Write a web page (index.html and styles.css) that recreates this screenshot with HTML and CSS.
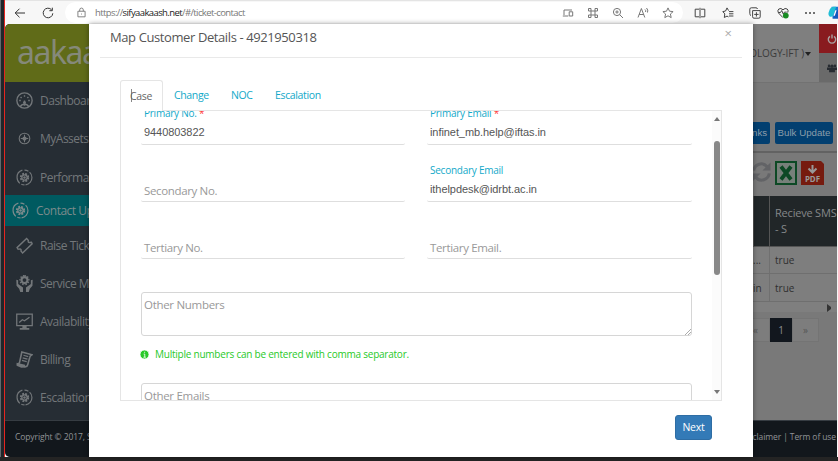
FILE: index.html
```html
<!DOCTYPE html>
<html lang="en">
<head>
<meta charset="utf-8">
<title>Ticket contact</title>
<link rel="stylesheet" href="styles.css">
</head>
<body>
<svg class="defs" aria-hidden="true">
  <symbol id="gear" viewBox="0 0 16 16"><g fill="none" stroke="currentColor"><path d="M6 1.1A7 7 0 0 0 1 8a7 7 0 0 0 2.6 5.5M5 14.3A7 7 0 0 0 8 15M9 15a7 7 0 0 0 6-7 7 7 0 0 0-2.2-5M11.7 2.1A7 7 0 0 0 8 1" stroke-width="1.1"/><circle cx="8" cy="8" r="3.4" stroke-width="2" stroke-dasharray="1.7 1"/><circle cx="8" cy="8" r="2.5" stroke-width="1.2"/></g><circle cx="8" cy="8" r="1.2" fill="currentColor"/></symbol>
</svg>
<div class="window">
  <header class="browser">
    <svg class="b-icon back" viewBox="0 0 12 12"><path d="M11 6H1.2M5.5 1.7 1.2 6l4.3 4.3"/></svg>
    <svg class="b-icon reload" viewBox="0 0 12 12"><path d="M10.8 6.3A4.8 4.8 0 1 1 9.6 2.8M10.3.7v3H7.4"/></svg>
    <div class="address">
      <svg class="b-icon lock" viewBox="0 0 10 12"><path d="M1 4.6h8v6.2H1zM3 4.6V3.1a2 2 0 0 1 4 0v1.5M5 7.2v1"/></svg>
      <span class="url">https://<b>sifyaakaash.net</b>/#/ticket-contact</span>
      <div class="tools">
        <svg class="b-icon" viewBox="0 0 12 12"><path d="M2 8V3h8M.8 9h5.5M7.2 4.8h3.5V9H7.2z"/></svg>
        <svg class="b-icon" viewBox="0 0 12 12"><path d="M4 1.500v9M8 1.500v9M1.500 4h9M1.500 8h9M1.500 1.500h2.500M8 1.500h2.500M1.500 10.500h2.500M8 10.500h2.500M1.500 1.500V4M10.500 1.500V4M1.500 8v2.500M10.500 8v2.500"/></svg>
        <svg class="b-icon" viewBox="0 0 12 12"><circle cx="5" cy="5" r="3.6"/><path d="M7.7 7.7 11 11M3.3 5h3.4M5 3.3v3.4"/></svg>
        <svg class="b-icon" viewBox="0 0 12 12"><path d="m1 10.5 3.4-9 3.4 9M2.2 7.5h4.500M8 2.500q1.100 1 .6 2.500M9.500 1q2 2 1 4.500"/></svg>
        <svg class="b-icon" viewBox="0 0 12 12"><path d="m6 .9 1.500 3.300 3.600.4-2.700 2.400.8 3.600L6 8.800l-3.200 1.800.8-3.600L.9 4.600l3.600-.4z"/></svg>
      </div>
    </div>
    <div class="actions">
      <svg class="b-icon" viewBox="0 0 12 12"><path d="M5 2.2H1.200v7.600H5M7 2.200h3.800v7.600H7M6 .8v10.400"/></svg>
      <svg class="b-icon" viewBox="0 0 12 12"><path d="M6.600 3.600 5 .9 3.600 4 .8 4.600l2 2.300-.5 3.600L5 9.100l1.500.8M7 4.600h4.400M7 6.800h4.400M7 9h4.400"/></svg>
      <svg class="b-icon" viewBox="0 0 12 12"><path d="M3.600 3.600h7.600v6.200q0 1.400-1.400 1.400H5q-1.400 0-1.400-1.400zM2 8.600Q.6 8 .8 6.400V2.200Q.9.8 2.300.8H7q1.200 0 1.600 1.200M7.400 5.200v4.400M5.200 7.400h4.400"/></svg>
      <svg class="b-icon" viewBox="0 0 12 12"><path d="M5.900 10.600 1.500 6Q0 3.600 1.800 2 4 .6 6 2.800 8 .6 10.200 2q1.600 1.600.5 3.600M1.500 5.500h2l1.200-2 1.600 3.600 1.200-2h2.200"/><circle class="ok" cx="8.800" cy="8.600" r="2.900"/></svg>
      <svg class="b-icon dots" viewBox="0 0 12 12"><circle cx="2" cy="6" r="1"/><circle cx="6" cy="6" r="1"/><circle cx="10" cy="6" r="1"/></svg>
    </div>
    <svg class="copilot" viewBox="0 0 11 16"><path fill="#1d78d2" d="M4 1h7v13H5z"/><path fill="#20bdd6" d="M6 1h3L6 10q-1 3-4 2-2-1-1.500-4L2 4q1-3 4-3"/><path fill="#1555bd" d="M8 5h3v9H5q2-1 3-9"/><path fill="#fff" d="M8 5h1.500L7.500 11H6z"/></svg>
  </header>

  <div class="app">
    <aside class="sidebar">
      <div class="brand">aakaa</div>
      <nav>
        <a class="item"><svg viewBox="0 0 16 16"><g fill="none" stroke="currentColor" stroke-width="1.3"><circle cx="8" cy="8" r="7.2"/><path d="M8 8v5M4 14q1-2.500 4-2.500t4 2.500"/><path d="M3 8h1.500M11.500 8H13M4.300 4.600l1 1M11.700 4.600l-1 1M8 3v1.500"/></g><circle cx="8" cy="10" r="1.400" fill="currentColor"/></svg>Dashboard</a>
        <a class="item"><svg viewBox="0 0 16 16"><g fill="none" stroke="currentColor"><circle cx="8" cy="8" r="5"/><path d="M8 4.500v7M4.500 8h7"/></g><circle cx="8" cy="8" r="2" fill="currentColor"/></svg>MyAssets</a>
        <a class="item low"><svg><use href="#gear"/></svg>Performance</a>
        <a class="item active"><svg><use href="#gear"/></svg>Contact Update</a>
        <a class="item"><svg viewBox="0 0 16 16"><path fill="none" stroke="currentColor" stroke-width="1.300" d="m1 10 9-8.500 1.600 1.700q-.7 1.600 1.200 2l1.800-.2.6 1.400-9 8.600-1.600-1.800q.8-1.500-.8-2L2 11.600z"/></svg>Raise Ticket</a>
        <a class="item"><svg viewBox="0 0 16 16"><circle cx="8" cy="4.800" r="2.800" fill="none" stroke="currentColor" stroke-width="2"/><path fill="none" stroke="currentColor" stroke-dasharray="1.300 1.400" stroke-width="1.300" d="M8 .6a4.200 4.200 0 1 1-.1 0"/><path fill="currentColor" d="M.3 4.500 2 5v3.500l4.600 3.300V16H4L3 13 .5 10zM15.700 4.500 14 5v3.500L9.400 11.800V16H12l1-3 2.500-3z"/></svg>Service Mgmt</a>
        <a class="item"><svg viewBox="0 0 16 16"><path fill="none" stroke="currentColor" stroke-width="1.200" d="M.7 1h14.600v10.800H.7zM3 9l3-2.700 2 1L12.700 4"/><path fill="currentColor" d="M6 12h4v2h2.500v1.700h-9V14H6z"/></svg>Availability</a>
        <a class="item"><svg viewBox="0 0 16 16"><path fill="none" stroke="currentColor" stroke-width="1.500" d="M5.500 1 15 3.500q-2 1-2.200 3L11 13q-.6 2.200-2.600 1.800L1 12.500q2 0 2.400-2z"/><path fill="none" stroke="currentColor" stroke-width="1.200" d="m7 4 4.500 1.200M6.300 6.400l4.500 1.200M5.600 8.800l4.500 1.200"/><path fill="currentColor" d="m.5 11 8 2 .5 2.500-4 .3-4.500-2z"/></svg>Billing</a>
        <a class="item"><svg><use href="#gear"/></svg>Escalation</a>
      </nav>
    </aside>

    <main class="main">
      <div class="topbar">
        <span class="account">OLOGY-IFT )<i></i></span>
        <div class="side-buttons">
          <span class="power"><svg viewBox="0 0 10 10"><path fill="none" stroke="#a9a1a1" stroke-width="1.400" d="M3 2.300a3.700 3.700 0 1 0 4 0M5 .5v4"/></svg></span>
          <span class="users"><svg viewBox="0 0 12 10"><g fill="#272b31"><circle cx="2.500" cy="2.500" r="1.600"/><circle cx="6" cy="2.800" r="2"/><circle cx="9.500" cy="2.500" r="1.600"/><path d="M0 4.500h12v3h-2.500V10h-7V7.500H0z"/></g></svg></span>
        </div>
      </div>
      <div class="buttons"><span class="btn links">nks</span><span class="btn bulk">Bulk Update</span></div>
      <div class="exports">
        <svg class="refresh" viewBox="0 0 20 22"><g fill="none" stroke="#626366" stroke-width="3.200"><path d="M1.800 9.500A8 8 0 0 1 16 5.500M18.200 12.500A8 8 0 0 1 4 16.500"/></g><path fill="#626366" d="M19.500 1v8.500H11zM.5 21v-8.500H9z"/></svg>
        <svg viewBox="0 0 22 24"><path fill="#77807a" stroke="#0d4925" stroke-width="2" d="M1 1h20v22H1z"/><path fill="none" stroke="#0d4925" stroke-width="3.800" d="m6 5.500 10 13M16 5.500l-10 13"/></svg>
        <svg class="pdf" viewBox="0 0 23 24"><path fill="#761b0f" d="M0 0h20l3 3v21H0z"/><path fill="none" stroke="#999" stroke-width="2" d="M11.500 4v7M7.500 7.500l4 4 4-4"/><text x="11.500" y="21" text-anchor="middle">PDF</text></svg>
      </div>
      <div class="table">
        <div class="cell head"></div><div class="cell head">Recieve SMS<br>- S</div>
        <div class="cell first">...</div><div class="cell">true</div>
        <div class="cell first">in</div><div class="cell">true</div>
      </div>
      <div class="hscroll"><i></i></div>
      <div class="pager"><span class="prev-page">«</span><span class="current">1</span><span class="next-page">»</span></div>
    </main>
    <footer class="footer"><span>Copyright © 2017, S</span><span>claimer | Term of use</span></footer>
  </div>
  <div class="taskbar"></div>

  <section class="modal">
    <div class="modal-head"><h1>Map Customer Details - 4921950318</h1><span class="close">×</span></div>
    <div class="tabs"><span class="tab selected">Case</span><span class="tab t-change">Change</span><span class="tab t-noc">NOC</span><span class="tab t-esc">Escalation</span></div>
    <div class="panel">
      <div class="form">
        <div class="grid">
          <div class="field"><label>Primary No. <em>*</em></label><div class="value">9440803822</div></div>
          <div class="field"><label>Primary Email <em>*</em></label><div class="value">infinet_mb.help@iftas.in</div></div>
          <div class="field"><label></label><div class="value hint">Secondary No.</div></div>
          <div class="field"><label>Secondary Email</label><div class="value">ithelpdesk@idrbt.ac.in</div></div>
          <div class="field"><label></label><div class="value hint">Tertiary No.</div></div>
          <div class="field"><label></label><div class="value hint">Tertiary Email.</div></div>
        </div>
        <div class="area">Other Numbers<svg class="grip" viewBox="0 0 6 6"><path d="M0 6 6 0M3 6l3-3"/></svg></div>
        <div class="note"><svg viewBox="0 0 10 10"><circle cx="5" cy="5" r="5"/><path d="M4 4.500h1.300V8M3.800 8h2.700M4.500 2.500h1.200"/></svg>Multiple numbers can be entered with comma separator.</div>
        <div class="area">Other Emails</div>
      </div>
      <div class="scrollbar"><i class="up"></i><i class="thumb"></i><i class="down"></i></div>
    </div>
    <div class="modal-foot"><span class="next">Next</span></div>
  </section>
</div>
</body>
</html>
```

FILE: styles.css
```css
* { box-sizing: border-box; }
body { margin: 0; background: #24292f; font-family: "Open Sans", "Noto Sans", sans-serif; font-size: 12px; color: #555; }
svg { display: block; flex: none; }
.defs { position: absolute; width: 0; height: 0; }
.window { position: relative; width: 838px; height: 461px; overflow: hidden; padding-left: 5px; background: linear-gradient(90deg, #62676b 0 1px, #20262a 1px 4px, #e52520 4px 5px, #f7f7f7 5px); display: flex; flex-direction: column; }

.browser { height: 24px; flex: none; display: flex; align-items: center; background: #f7f7f7; border-top: 1px solid #e4e4e4; }
.b-icon { width: 12px; height: 12px; fill: none; stroke: #555; stroke-width: 1; }
.back { margin-left: 9px; stroke: #333; }
.reload { margin-left: 16px; stroke: #333; }
.address { margin-left: 11px; width: 623px; height: 21px; border-radius: 11px; background: #fff; display: flex; align-items: center; }
.lock { width: 9px; height: 11px; margin-left: 12px; stroke: #777; }
.url { margin-left: 9px; width: 160px; font-size: 9.5px; letter-spacing: -.6px; color: #777; white-space: nowrap; }
.url b { font-weight: 400; color: #222; }
.tools { margin-left: auto; margin-right: 9px; display: flex; gap: 13px; }
.tools .b-icon { stroke: #777; }
.actions { margin-left: 11px; display: flex; gap: 15.5px; }
.actions .b-icon { stroke: #444; }
.actions .dots { fill: #444; stroke: none; }
.ok { fill: #188b23; stroke: none; }
.copilot { width: 10px; height: 16px; margin-left: 12px; }

.app { width: 832px; height: 433px; flex: none; display: grid; grid-template: 396px 37px / 84px 748px; background: #797979; border-radius: 5px 0 0 5px; overflow: hidden; }
.taskbar { height: 4px; margin-left: -5px; background: #242424; }
.sidebar { background: #262d34; overflow: hidden; white-space: nowrap; }
.brand { height: 58px; padding: 8px 0 0 12px; background: #606b18; color: #85897a; font: 32px/40px "Noto Sans", sans-serif; letter-spacing: -1.5px; }
.item { height: 38px; padding-left: 11px; display: flex; align-items: center; gap: 7px; color: #73777a; font-size: 12px; letter-spacing: -.5px; }
.item svg { width: 17px; height: 17px; }
.item:nth-child(1) { height: 37px; }
.item.low { padding-top: 3px; }
.item.active { height: 31px; padding-left: 7px; background: #005a60; color: #7b8b8c; }

.main { padding-left: 664px; overflow: hidden; }
.topbar { height: 59px; border-bottom: 1px solid #727272; background: #7f7f7f; display: flex; justify-content: flex-end; }
.account { display: flex; align-items: center; margin-right: 8px; font-size: 10px; letter-spacing: -.1px; color: #3b3b3b; white-space: nowrap; }
.account i { margin: 2px 0 0 1px; border: 3.5px solid transparent; border-top: 4px solid #222; border-bottom: 0; }
.side-buttons { width: 18px; flex: none; }
.side-buttons span { height: 29px; display: flex; align-items: center; padding-left: 8px; overflow: hidden; }
.side-buttons svg { width: 10px; height: 10px; }
.power { background: #891b1f; }
.users { background: #6a6a6a; }
.buttons { height: 68px; padding-top: 39px; display: flex; justify-content: flex-end; gap: 5px; margin-right: 4px; }
.btn { flex: none; height: 22px; line-height: 22px; border-radius: 2px; background: #023f70; color: #8b9daa; font-family: "Liberation Sans", sans-serif; font-size: 9.7px; text-align: center; white-space: nowrap; }
.links { width: 18px; text-align: right; padding-right: 3px; border-radius: 0 2px 2px 0; }
.bulk { width: 58px; }
.exports { height: 45px; padding-top: 8px; border-top: 2px solid #626262; display: flex; gap: 4px; margin-left: -1px; }
.exports svg { width: 22px; height: 24px; }
.exports .refresh { width: 19px; height: 22px; }
.exports .pdf { width: 23px; }
.pdf text { font: 700 8px "Noto Sans", sans-serif; fill: #999; }
.table { display: grid; grid-template: 51px 27px 28px / 16px 68px; background: #7e7e7e; }
.cell { padding-left: 5px; display: flex; align-items: center; border-left: 1px solid #707070; border-bottom: 1px solid #6f6f6f; color: #2f2f2f; font-size: 10px; }
.cell.first { padding-left: 0; border-left: 0; }
.cell.head { background: #212628; color: #85888a; font-size: 11px; letter-spacing: -.2px; white-space: nowrap; line-height: 16px; border-color: #555; }
.hscroll { height: 10px; background: #7f7f7f; display: flex; justify-content: flex-end; padding: 2px 6px 0 0; }
.hscroll i { border: 3px solid transparent; border-left: 4px solid #333; border-right: 0; }
.pager { display: flex; height: 24px; margin-top: 6px; font-size: 10px; color: #555; text-align: center; line-height: 22px; }
.pager span { border: 1px solid #747474; background: #7d7d7d; }
.pager .prev-page { width: 17px; border-left: 0; text-align: left; }
.pager .current { width: 22px; background: #12171e; border-color: #12171e; color: #8b8e91; }
.pager .next-page { width: 27px; }
.footer { grid-column: 1 / 3; display: flex; justify-content: space-between; align-items: center; padding: 0 1px 5px 10px; background: #12171c; border-top: 1px solid #363c42; color: #909396; font-size: 8.5px; letter-spacing: -.1px; }

.modal { position: absolute; left: 89px; top: 24px; width: 664px; height: 433px; background: #fff; box-shadow: 0 0 5px #0006; overflow: hidden; }
.modal-head { height: 34px; margin: 0 11px; padding-left: 10px; border-bottom: 1px solid #e9e9e9; display: flex; justify-content: space-between; }
.modal-head h1 { margin: 3px 0 0; font-size: 13px; line-height: 20px; letter-spacing: -.4px; font-weight: 400; color: #555; white-space: nowrap; }
.close { margin: 2px 10px 0 0; font-size: 13px; line-height: 14px; color: #aaa; }
.tabs { margin: 22px 0 0 31px; height: 31px; display: flex; position: relative; line-height: 30px; font-size: 10.5px; letter-spacing: -.35px; color: #12a9c9; }
.selected { width: 43px; height: 31px; padding-left: 9px; border: 1px solid #e5e5e5; border-bottom: 0; border-radius: 3px 3px 0 0; background: linear-gradient(#888, #888) 10px 8px / 1px 13px no-repeat #fff; color: #666; }
.tab { white-space: nowrap; }
.t-change { margin-left: 11px; width: 57px; }
.t-noc { width: 44px; }
.panel { width: 602px; height: 291px; margin: -1px 0 0 31px; border: 1px solid #e5e5e5; display: flex; justify-content: space-between; overflow: hidden; }
.form { width: 551px; margin-left: 20px; }
.grid { display: grid; grid-template-columns: 264px 265px; column-gap: 22px; }
.field { height: 57px; border-bottom: 1px solid #dedede; border-radius: 2px; padding-left: 3px; white-space: nowrap; }
.field:nth-child(-n+2) { height: 34px; }
.field label { display: block; margin-top: 18px; height: 14px; line-height: 14px; font-size: 10px; letter-spacing: -.25px; color: #12a9c9; }
.field:nth-child(-n+2) label { margin-top: -5px; }
.field em { font-style: normal; color: #f33; }
.value { margin-top: 3px; height: 18px; line-height: 18px; font-family: "Liberation Sans", sans-serif; font-size: 11px; letter-spacing: -.07px; color: #555; }
.value.hint { font-family: "Open Sans", sans-serif; font-size: 11.5px; letter-spacing: -.35px; color: #999; margin-top: 5px; }
.area { position: relative; height: 44px; margin-top: 33px; border: 1px solid #d6d6d6; border-radius: 3px; padding: 4px 2px; line-height: 16px; font-size: 11.5px; letter-spacing: -.3px; color: #999; }
.grip { position: absolute; right: 0; bottom: 0; width: 6px; height: 6px; fill: none; stroke: #888; stroke-width: .7; }
.note { display: flex; align-items: center; height: 16px; margin: 10px 0 0 -1px; gap: 6px; font-size: 10px; letter-spacing: -.23px; color: #28c928; white-space: nowrap; }
.note svg { width: 9px; height: 9px; fill: #28c928; stroke: #fff; stroke-width: .9; }
.note + .area { margin-top: 21px; }
.scrollbar { width: 9px; background: #fbfbfb; display: flex; flex-direction: column; align-items: center; }
.scrollbar i { border: 3px solid transparent; }
.scrollbar .up { margin-top: 6px; border-top: 0; border-bottom: 4px solid #777; }
.scrollbar .thumb { border: 0; width: 6px; height: 134px; border-radius: 3px; background: #888; margin-top: 20px; }
.scrollbar .down { margin: auto 0 6px; border-bottom: 0; border-top: 4px solid #777; }
.modal-foot { display: flex; justify-content: flex-end; padding: 14px 41px 0 0; }
.next { width: 37px; height: 25px; line-height: 23px; border: 1px solid #2e6da4; border-radius: 3px; background: #337ab7; color: #fff; text-align: center; font-size: 10.5px; letter-spacing: -.2px; }
```
